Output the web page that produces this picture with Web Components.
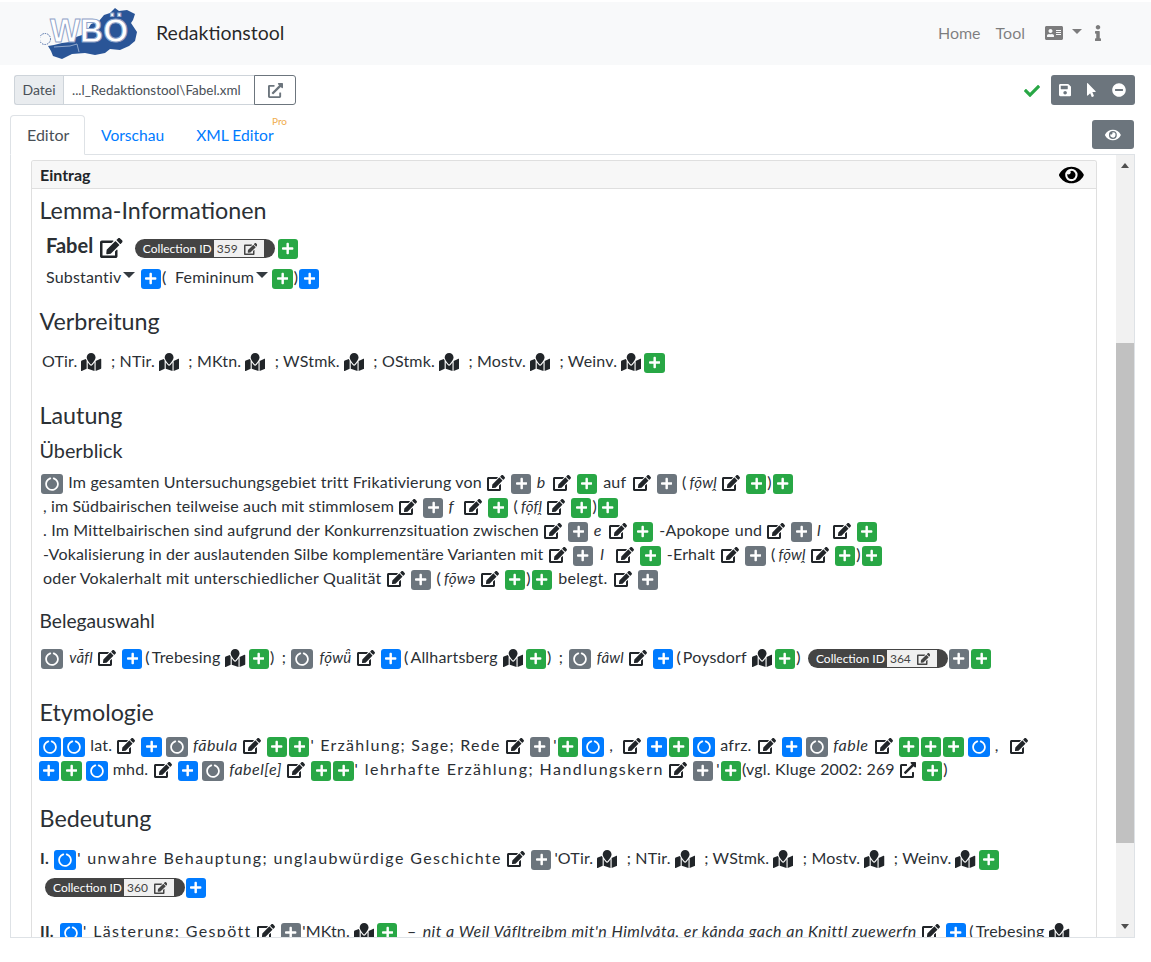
<!DOCTYPE html>
<html lang="de"><head><meta charset="utf-8"><title>Redaktionstool</title>
<style>
html,body{margin:0;padding:0;background:#fff;height:962px;overflow:hidden}
body{font:16px/24px Lato,"Noto Sans","DejaVu Sans",sans-serif;color:#2b3035}
</style></head><body>
<wb-app></wb-app>
<template id="content">
<wb-row top="7"><wb-heading size="23.3">Lemma-Informationen</wb-heading></wb-row>
<wb-row top="5" h="30" left="6" ls="0"><b style="font-size:20px;line-height:30px">Fabel</b> <wb-edit size="20" style="margin-left:3px"></wb-edit> <wb-pill value="359" style="margin-left:3px"></wb-pill><wb-btn c="green" style="margin-left:3px"></wb-btn></wb-row>
<wb-row top="3" left="6">Substantiv<wb-caret></wb-caret> <wb-btn c="blue"></wb-btn>( &nbsp;Femininum<wb-caret></wb-caret> <wb-btn c="green" style="margin-left:0"></wb-btn>)<wb-btn c="blue"></wb-btn></wb-row>
<wb-row top="18"><wb-heading size="23.3">Verbreitung</wb-heading></wb-row>
<wb-row top="13" left="2">OTir. <wb-map></wb-map> <span class="sc">;</span> NTir. <wb-map></wb-map> <span class="sc">;</span> MKtn. <wb-map></wb-map> <span class="sc">;</span> WStmk. <wb-map></wb-map> <span class="sc">;</span> OStmk. <wb-map></wb-map> <span class="sc">;</span> Mostv. <wb-map></wb-map> <span class="sc">;</span> Weinv. <wb-map></wb-map><wb-btn c="green"></wb-btn></wb-row>
<wb-row top="28"><wb-heading size="23.3">Lautung</wb-heading></wb-row>
<wb-row top="8" h="24"><wb-heading size="19.8">Überblick</wb-heading></wb-row>
<wb-row top="7"><wb-btn c="gray" i="circle" style="margin-left:1px"></wb-btn> Im gesamten Untersuchungsgebiet tritt Frikativierung von <wb-edit></wb-edit><wb-btn c="gray"></wb-btn> <i class="w">b</i> <wb-edit></wb-edit><wb-btn c="green"></wb-btn> <span class="m">auf</span> <wb-edit></wb-edit><wb-btn c="gray"></wb-btn> (<span class="p">fọ̄wḽ</span> <wb-edit></wb-edit><wb-btn c="green"></wb-btn>)<wb-btn c="green"></wb-btn></wb-row>
<wb-row left="3" ls=".12">, im Südbairischen teilweise auch mit stimmlosem <wb-edit></wb-edit><wb-btn c="gray"></wb-btn> <i class="w" style="margin-right:5px">f</i> <wb-edit></wb-edit><wb-btn c="green"></wb-btn> (<span class="p">fọ̄fḽ</span> <wb-edit></wb-edit><wb-btn c="green"></wb-btn>)<wb-btn c="green"></wb-btn></wb-row>
<wb-row left="3" ls=".165">. Im Mittelbairischen sind aufgrund der Konkurrenzsituation zwischen <wb-edit></wb-edit><wb-btn c="gray"></wb-btn> <i class="w">e</i> <wb-edit></wb-edit><wb-btn c="green"></wb-btn> <span class="m">-Apokope</span> und <wb-edit></wb-edit><wb-btn c="gray"></wb-btn> <i class="w ll">l</i> <wb-edit></wb-edit><wb-btn c="green"></wb-btn></wb-row>
<wb-row left="3" ls=".165">-Vokalisierung in der auslautenden Silbe komplementäre Varianten mit <wb-edit></wb-edit><wb-btn c="gray"></wb-btn> <i class="w ll" style="margin-left:2px">l</i> <wb-edit></wb-edit><wb-btn c="green"></wb-btn> <span class="m">-Erhalt</span> <wb-edit></wb-edit><wb-btn c="gray"></wb-btn> (<span class="p">fọ̄wḽ</span> <wb-edit></wb-edit><wb-btn c="green"></wb-btn>)<wb-btn c="green"></wb-btn></wb-row>
<wb-row left="3" ls=".25">oder Vokalerhalt mit unterschiedlicher Qualität <wb-edit></wb-edit><wb-btn c="gray"></wb-btn> (<span class="p">fọ̄wə</span> <wb-edit></wb-edit><wb-btn c="green"></wb-btn>)<wb-btn c="green"></wb-btn> <span class="m">belegt.</span> <wb-edit></wb-edit><wb-btn c="gray"></wb-btn></wb-row>
<wb-row top="19" h="24"><wb-heading size="19.2">Belegauswahl</wb-heading></wb-row>
<wb-row top="12"><wb-btn c="gray" i="circle" style="margin-left:1px"></wb-btn> <span class="p pb">vå̄fl</span> <wb-edit></wb-edit><wb-btn c="blue"></wb-btn><span class="o">(<span class="q">Trebesing</span></span> <wb-map></wb-map><wb-btn c="green"></wb-btn>) <span class="sc">;</span> <wb-btn c="gray" i="circle" style="margin-left:1px"></wb-btn> <span class="p pb">fọ̄wü̯</span> <wb-edit></wb-edit><wb-btn c="blue"></wb-btn><span class="o">(<span class="q">Allhartsberg</span></span> <wb-map></wb-map><wb-btn c="green"></wb-btn>) <span class="sc">;</span> <wb-btn c="gray" i="circle" style="margin-left:1px"></wb-btn> <span class="p pb">fâwl</span> <wb-edit></wb-edit><wb-btn c="blue"></wb-btn><span class="o">(<span class="q">Poysdorf</span></span> <wb-map></wb-map><wb-btn c="green"></wb-btn>) <wb-pill value="364" style="margin-left:3px"></wb-pill><wb-btn c="gray"></wb-btn><wb-btn c="green"></wb-btn></wb-row>
<wb-row top="29"><wb-heading size="23.3">Etymologie</wb-heading></wb-row>
<wb-row top="6" left="-2"><wb-btn c="blue" i="circle" style="margin-left:1px"></wb-btn><wb-btn c="blue" i="circle" style="margin-left:1px"></wb-btn> lat. <wb-edit></wb-edit><wb-btn c="blue"></wb-btn><wb-btn c="gray" i="circle"></wb-btn> <i class="f">fābula</i> <wb-edit></wb-edit><wb-btn c="green"></wb-btn><wb-btn c="green"></wb-btn><span class="g" style="letter-spacing:1.26px">' Erzählung; Sage; Rede</span> <wb-edit></wb-edit><wb-btn c="gray"></wb-btn><span class="a">'</span><wb-btn c="green"></wb-btn><wb-btn c="blue" i="circle"></wb-btn> , &nbsp;<wb-edit></wb-edit><wb-btn c="blue"></wb-btn><wb-btn c="green"></wb-btn><wb-btn c="blue" i="circle"></wb-btn> afrz. <wb-edit style="margin-left:2px"></wb-edit><wb-btn c="blue"></wb-btn><wb-btn c="gray" i="circle"></wb-btn> <i class="f">fable</i> <wb-edit style="margin-left:2px"></wb-edit><wb-btn c="green"></wb-btn><wb-btn c="green"></wb-btn><wb-btn c="green"></wb-btn><wb-btn c="blue" i="circle"></wb-btn> , &nbsp;<wb-edit style="margin-left:3px"></wb-edit></wb-row>
<wb-row left="-2"><wb-btn c="blue"></wb-btn><wb-btn c="green"></wb-btn><wb-btn c="blue" i="circle"></wb-btn> mhd. <wb-edit></wb-edit><wb-btn c="blue"></wb-btn><wb-btn c="gray" i="circle"></wb-btn> <i class="f">fabel[e]</i> <wb-edit></wb-edit><wb-btn c="green"></wb-btn><wb-btn c="green"></wb-btn><span class="g" style="letter-spacing:1.43px">' lehrhafte Erzählung; Handlungskern</span> <wb-edit></wb-edit><wb-btn c="gray"></wb-btn><span class="a">'</span><wb-btn c="green"></wb-btn>(vgl. Kluge 2002: 269 <wb-edit kind="ext"></wb-edit><wb-btn c="green"></wb-btn>)</wb-row>
<wb-row top="23"><wb-heading size="23.3">Bedeutung</wb-heading></wb-row>
<wb-row top="13"><b>I.</b> <wb-btn c="blue" i="circle" style="margin-left:1px"></wb-btn><span class="g">' unwahre Behauptung; unglaubwürdige Geschichte</span> <wb-edit></wb-edit><wb-btn c="gray"></wb-btn><span class="a">'</span>OTir. <wb-map></wb-map> <span class="sc">;</span> NTir. <wb-map></wb-map> <span class="sc">;</span> WStmk. <wb-map></wb-map> <span class="sc">;</span> Mostv. <wb-map></wb-map> <span class="sc">;</span> Weinv. <wb-map></wb-map><wb-btn c="green"></wb-btn></wb-row>
<wb-row top="4" left="5"><wb-pill value="360"></wb-pill><wb-btn c="blue"></wb-btn></wb-row>
<wb-row top="21"><b>II.</b> <wb-btn c="blue" i="circle" style="margin-left:2px"></wb-btn><span class="g">' Lästerung; Gespött</span> <wb-edit></wb-edit><wb-btn c="gray"></wb-btn>'MKtn. <wb-map></wb-map><wb-btn c="green"></wb-btn> &nbsp;– <i style="letter-spacing:.46px;margin-left:2px">nit a Weil Våfltreibm mit'n Himlvåta, er kånda gach an Knittl zuewerfn</i> <wb-edit></wb-edit><wb-btn c="blue"></wb-btn><span class="o">(<span class="q">Trebesing</span></span> <wb-map></wb-map></wb-row>
</template>
<script>
const P={
edit:[576,"M402.6 83.2l90.2 90.2c3.8 3.8 3.8 10 0 13.8L274.4 405.6l-92.8 10.3c-12.4 1.4-22.9-9.1-21.5-21.5l10.3-92.8L388.8 83.2c3.8-3.8 10-3.8 13.8 0zm162-22.9l-48.8-48.8c-15.2-15.2-39.9-15.2-55.2 0l-35.4 35.4c-3.8 3.8-3.8 10 0 13.8l90.2 90.2c3.8 3.8 10 3.8 13.8 0l35.4-35.4c15.2-15.3 15.2-40 0-55.2zM384 346.2V448H64V128h229.8c3.2 0 6.2-1.3 8.5-3.5l40-40c7.6-7.6 2.2-20.5-8.5-20.5H48C21.5 64 0 85.5 0 112v352c0 26.5 21.5 48 48 48h352c26.5 0 48-21.5 48-48V306.2c0-10.7-12.9-16-20.5-8.5l-40 40c-2.2 2.3-3.5 5.3-3.5 8.5z"],
plus:[448,"M416 208H272V64c0-17.67-14.33-32-32-32h-32c-17.67 0-32 14.33-32 32v144H32c-17.67 0-32 14.33-32 32v32c0 17.67 14.33 32 32 32h144v144c0 17.67 14.33 32 32 32h32c17.67 0 32-14.33 32-32V304h144c17.67 0 32-14.33 32-32v-32c0-17.67-14.33-32-32-32z"],
circle:[512,"M288 39.056v16.659c0 10.804 7.281 20.159 17.686 23.066C383.204 100.434 440 171.518 440 256c0 101.689-82.295 184-184 184-101.689 0-184-82.295-184-184 0-84.47 56.786-155.564 134.312-177.219C216.719 75.874 224 66.517 224 55.712V39.064c0-15.709-14.834-27.153-30.046-23.234C86.603 43.482 7.394 141.206 8.003 257.332c.72 137.052 111.477 246.956 248.531 246.667C393.255 503.711 504 392.788 504 256c0-115.633-79.14-212.779-186.211-240.236C302.678 11.889 288 23.456 288 39.056z"],
map:[576,"M288 0c-69.59 0-126 56.41-126 126 0 56.26 82.35 158.8 113.9 196.02 6.39 7.54 17.82 7.54 24.2 0C331.65 284.8 414 182.26 414 126 414 56.41 357.59 0 288 0zM20.12 215.95A32.006 32.006 0 0 0 0 245.66v250.32c0 11.32 11.43 19.06 21.94 14.86L160 448V214.92c-8.84-15.98-16.07-31.54-21.25-46.42L20.12 215.95zM288 359.67c-14.07 0-27.38-6.18-36.51-16.96-19.66-23.2-40.57-49.62-59.49-76.72V448l192 64V266c-18.92 27.09-39.82 53.52-59.49 76.72-9.13 10.77-22.44 16.95-36.51 16.95zm266.06-198.51L416 224v288l139.88-55.95A31.996 31.996 0 0 0 576 426.34V176.02c0-11.32-11.43-19.06-21.94-14.86z"],
eye:[576,"M572.52 241.4C518.29 135.59 410.93 64 288 64S57.68 135.64 3.48 241.41a32.35 32.35 0 0 0 0 29.19C57.71 376.41 165.07 448 288 448s230.32-71.64 284.52-177.41a32.35 32.35 0 0 0 0-29.19zM288 400a144 144 0 1 1 144-144 143.93 143.93 0 0 1-144 144zm0-240a95.31 95.31 0 0 0-25.31 3.79 47.85 47.85 0 0 1-66.9 66.9A95.78 95.78 0 1 0 288 160z"],
save:[448,"M433.941 129.941l-83.882-83.882A48 48 0 0 0 316.118 32H48C21.49 32 0 53.49 0 80v352c0 26.51 21.49 48 48 48h352c26.51 0 48-21.49 48-48V163.882a48 48 0 0 0-14.059-33.941zM224 416c-35.346 0-64-28.654-64-64 0-35.346 28.654-64 64-64s64 28.654 64 64c0 35.346-28.654 64-64 64zm96-304.52V212c0 6.627-5.373 12-12 12H76c-6.627 0-12-5.373-12-12V108c0-6.627 5.373-12 12-12h228.52c3.183 0 6.235 1.264 8.485 3.515l3.48 3.48A11.996 11.996 0 0 1 320 111.48z"],
pointer:[320,"M302.189 329.126H196.105l55.831 135.993c3.889 9.428-.555 19.999-9.444 23.999l-49.165 21.427c-9.165 4-19.443-.571-23.332-9.714l-53.053-129.136-86.664 89.138C18.729 472.71 0 463.554 0 447.977V18.299C0 1.899 19.921-6.096 30.277 5.443l284.412 292.542c11.472 11.179 3.007 31.141-12.5 31.141z"],
minus:[512,"M256 8C119 8 8 119 8 256s111 248 248 248 248-111 248-248S393 8 256 8zM124 296c-6.6 0-12-5.4-12-12v-56c0-6.6 5.4-12 12-12h264c6.6 0 12 5.4 12 12v56c0 6.6-5.4 12-12 12H124z"],
check:[512,"M173.898 439.404l-166.4-166.4c-9.997-9.997-9.997-26.206 0-36.204l36.203-36.204c9.997-9.998 26.207-9.998 36.204 0L192 312.69 432.095 72.596c9.997-9.997 26.207-9.997 36.204 0l36.203 36.204c9.997 9.997 9.997 26.206 0 36.204l-294.4 294.401c-9.998 9.997-26.207 9.997-36.204-.001z"],
ext:[512,"M432 320h-32a16 16 0 0 0-16 16v112H64V128h144a16 16 0 0 0 16-16V80a16 16 0 0 0-16-16H48A48 48 0 0 0 0 112v352a48 48 0 0 0 48 48h352a48 48 0 0 0 48-48V336a16 16 0 0 0-16-16zM488 0H360c-21.37 0-32.05 25.91-17 41l35.73 35.73L135 320.37a24 24 0 0 0 0 34L157.67 377a24 24 0 0 0 34 0l243.61-243.68L471 169c15 15 41 4.5 41-17V24a24 24 0 0 0-24-24z"],
idcard:[576,"M528 32H48C21.5 32 0 53.5 0 80v352c0 26.5 21.5 48 48 48h480c26.5 0 48-21.5 48-48V80c0-26.5-21.5-48-48-48zm-352 96c35.3 0 64 28.7 64 64s-28.7 64-64 64-64-28.7-64-64 28.7-64 64-64zm112 236.8c0 10.6-10 19.2-22.4 19.2H86.4C74 384 64 375.4 64 364.8v-19.2c0-31.8 30.1-57.6 67.2-57.6h5c12.3 5.1 25.7 8 39.8 8s27.6-2.9 39.8-8h5c37.1 0 67.2 25.8 67.2 57.6v19.2zM512 312c0 4.4-3.6 8-8 8H360c-4.4 0-8-3.6-8-8v-16c0-4.4 3.6-8 8-8h144c4.4 0 8 3.6 8 8v16zm0-64c0 4.4-3.6 8-8 8H360c-4.4 0-8-3.6-8-8v-16c0-4.4 3.6-8 8-8h144c4.4 0 8 3.6 8 8v16zm0-64c0 4.4-3.6 8-8 8H360c-4.4 0-8-3.6-8-8v-16c0-4.4 3.6-8 8-8h144c4.4 0 8 3.6 8 8v16z"],
info:[192,"M20 424.229h20V279.771H20c-11.046 0-20-8.954-20-20V212c0-11.046 8.954-20 20-20h112c11.046 0 20 8.954 20 20v212.229h20c11.046 0 20 8.954 20 20V492c0 11.046-8.954 20-20 20H20c-11.046 0-20-8.954-20-20v-47.771c0-11.046 8.954-20 20-20zM96 0C56.235 0 24 32.235 24 72s32.235 72 72 72 72-32.235 72-72S135.764 0 96 0z"]};
function svg(n,h,color){const[w,d]=P[n];return `<svg xmlns="http://www.w3.org/2000/svg" viewBox="0 0 ${w} 512" width="${w/512*h}" height="${h}" style="display:block;flex:none" fill="${color||'currentColor'}"><path d="${d}"/></svg>`}
function def(name,html,init){customElements.define(name,class extends HTMLElement{constructor(){super();this.attachShadow({mode:'open'})}connectedCallback(){this.shadowRoot.innerHTML=typeof html==='function'?html(this):html;init&&init(this)}})}
const COL={green:'#28a745',blue:'#007bff',gray:'#6c757d'};
def('wb-btn',e=>{const i=e.getAttribute('i')||'plus',c=COL[e.getAttribute('c')];return `<style>:host{display:inline-flex;align-items:center;justify-content:center;vertical-align:middle;box-sizing:border-box;height:20px;width:${i==='circle'?22:20.25}px;margin:-1px 1px 0 ${i==='circle'?3:1}px;background:${c};color:#fff;border-radius:3px}</style>${svg(i,i==='circle'?14:13)}`});
def('wb-edit',e=>{const k=e.getAttribute('kind')||'edit',s=+e.getAttribute('size')||16;return `<style>:host{display:inline-block;vertical-align:middle;margin:-3px 5px 0 1px;color:#212529}</style>${svg(k,s)}`});
def('wb-map',`<style>:host{display:inline-block;vertical-align:middle;margin:-2px 2px 0 -.35px;color:#212529}</style>${svg('map',18)}`);
def('wb-caret',`<style>:host{display:inline-block;vertical-align:middle;width:0;height:0;margin:-8px 0 0 2px;border:6px solid transparent;border-top:6px solid #343a40;border-bottom:0}</style>`);
def('wb-pill',e=>`<style>:host{display:inline-flex;vertical-align:middle;align-items:center;box-sizing:border-box;width:140px;height:19px;margin-top:-1px;background:#444;border-radius:10px;color:#fff;font-size:12px;letter-spacing:0;line-height:19px;padding-left:8px;white-space:nowrap}
.v{margin-left:auto;margin-right:11px;width:50px;height:17px;box-sizing:border-box;background:#f0f0f0;color:#444;display:flex;align-items:center;padding-left:3px;line-height:17px}svg{margin-left:6px}</style>Collection ID<span class="v">${e.getAttribute('value')}${svg('edit',12)}</span>`);
def('wb-row',e=>{const t=e.getAttribute('top')||0,h=e.getAttribute('h')||24,l=e.getAttribute('left')||0,ls=e.getAttribute('ls')||.18;return `<style>:host{display:block;margin-top:${t}px;min-height:${h}px;margin-left:${l}px;line-height:${h}px;white-space:nowrap;letter-spacing:${ls}px}</style><slot></slot>`});
def('wb-heading',e=>{const s=e.getAttribute('size');return `<style>:host{display:block;margin-left:-.5px;font-size:${s}px;line-height:1.25;font-weight:400;letter-spacing:0}</style><slot></slot>`});
def('wb-logo',`<style>:host{display:block;width:97px;height:52px;flex:none}svg{display:block}text{font:bold 33px "Liberation Sans",sans-serif}</style>
<svg width="97" height="52" viewBox="40 8 97 52"><path d="M48 46 54 45 62 43 70 42 76 37 85 34 91 24 99 21 104 15 110 13 115 8 119 11 127 10 135 14 133 20 131 23 137 32 135 41 129 46 120 50 110 49 105 53 95 55 85 53 72 54 62 59 53 56 51 51Z" fill="#2a5597"/><circle cx="45" cy="39" r="5.5" fill="none" stroke="#4a6aa5" stroke-width="1" stroke-dasharray="1.5 1"/><path d="M54 47 70 46 77 44 79 52" fill="none" stroke="#a9bcd9" stroke-width=".8"/><text x="50" y="42" fill="#fff" stroke="#8fa3c9" stroke-width="1" textLength="78" lengthAdjust="spacingAndGlyphs">WBÖ</text></svg>`);
def('wb-nav',`<style>:host{display:flex;align-items:center;box-sizing:border-box;height:63px;margin-top:2px;padding-left:40px;background:#f8f9fa;color:rgba(0,0,0,.5);letter-spacing:0}
.b{margin-left:19px;font-size:19.5px;color:rgba(0,0,0,.85);margin-top:-1px}.r{margin-left:auto;display:flex;align-items:center;padding-right:50px;margin-top:-1px}
.t{margin-right:15px}.t+.t{margin-right:20px}.c{width:0;height:0;border:5px solid transparent;border-top-color:rgba(0,0,0,.5);border-bottom:0;margin:-3px 13px 0 9px}</style>
<wb-logo></wb-logo><span class="b">Redaktionstool</span><div class="r"><span class="t">Home</span><span class="t">Tool</span>${svg('idcard',16)}<span class="c"></span>${svg('info',16)}</div>`);
def('wb-file',`<style>:host{display:flex;height:30px;font-size:14px;line-height:28px;box-sizing:border-box}
div{box-sizing:border-box;border:1px solid #ced4da;height:30px;white-space:nowrap}
.a{width:49px;background:#e9ecef;color:#495057;text-align:center;border-radius:3px 0 0 3px;border-right:0}.i{width:192px;color:#495057;padding-left:8px;font-size:13.45px}
.e{width:42px;border:1px solid #6c757d;border-radius:0 3px 3px 0;margin-left:-1px;display:flex;align-items:center;justify-content:center;color:#6c757d}</style>
<div class="a">Datei</div><div class="i">...l_Redaktionstool\\Fabel.xml</div><div class="e">${svg('ext',15)}</div>`);
def('wb-actions',`<style>:host{display:flex;align-items:center;color:#fff}.k{margin-right:11px;margin-top:1px}.g{width:84px;height:30px;background:#6c757d;border-radius:3px;display:flex;align-items:center;justify-content:space-between;padding:0 9px 0 8px;box-sizing:border-box}</style>
<span class="k">${svg('check',16,'#28a745')}</span><div class="g">${svg('save',14)}${svg('pointer',14)}${svg('minus',14)}</div>`);
def('wb-tabs',`<style>:host{display:flex;height:40px;box-sizing:border-box;margin:10px 16px 0 10px;border-bottom:1px solid #dee2e6;position:relative}
a{display:block;box-sizing:border-box;height:40px;padding:8px 16px;color:#007bff;white-space:nowrap;font-size:15.6px}
.on{width:75px;color:#495057;border:1px solid #dee2e6;border-bottom-color:#fff;border-radius:4px 4px 0 0;background:#fff;font-size:16px;line-height:22px}
sup{position:absolute;font-size:10px;line-height:12px;color:#f0ad4e;left:262px;top:0}
.eye{margin-left:auto;margin-right:1px;margin-top:5px;width:42px;height:29px;border-radius:3px;background:#6c757d;color:#fff;display:flex;align-items:center;justify-content:center}</style>
<a class="on">Editor</a><a>Vorschau</a><a>XML Editor</a><sup>Pro</sup><div class="eye">${svg('eye',14)}</div>`);
def('wb-scrollbar',`<style>:host{display:flex;flex-direction:column;width:18px;height:100%;background:#f1f1f1;flex:none;position:relative}
.u,.d{position:absolute;left:5px;width:0;height:0;border:4px solid transparent}.u{top:8px;border-top:0;border-bottom:5px solid #505050}.d{bottom:8px;border-bottom:0;border-top:5px solid #505050}
.t{margin-top:188px;height:500px;background:#c1c1c1}</style><span class="u"></span><div class="t"></div><span class="d"></span>`);
def('wb-card',`<style>:host{display:block;box-sizing:border-box;width:1066px;margin:5px 0 0 20px;border:1px solid #dfdfdf;border-bottom:0;border-radius:3px 3px 0 0;height:800px;overflow:hidden}
.h{height:28px;box-sizing:border-box;border-bottom:1px solid #dfdfdf;background:#f7f7f7;display:flex;align-items:center;justify-content:space-between;padding:0 12px 0 8px;font-size:16px;font-weight:700;color:#212529}
.b{padding:0 8px}</style><div class="h"><span>Eintrag</span><span style="color:#000">${svg('eye',22)}</span></div><div class="b"><slot></slot></div>`);
def('wb-app',`<style>:host{display:block;height:962px}.tb{display:flex;justify-content:space-between;margin:10px 16px 0 14px}
.pane{display:flex;box-sizing:border-box;height:783px;margin:0 16px 0 10px;border-left:1px solid #dee2e6;border-bottom:1px solid #dee2e6;border-right:1px solid #dee2e6;justify-content:space-between;overflow:hidden}
.g{letter-spacing:1.37px}
.p{font-style:italic;font-size:15px;margin-left:3px}.pb{margin-left:1px}.f{letter-spacing:.5px}
.sc{margin:0 0 0 3px}.m{margin:0 1px}.w{margin:0 2px 0 0}.ll{margin-right:7px}.o{margin-left:2px}.q{margin:0 1px 0 2px}.a{margin-left:2px}
</style><wb-nav></wb-nav><div class="tb"><wb-file></wb-file><wb-actions></wb-actions></div><wb-tabs></wb-tabs>
<div class="pane"><wb-card id="c"></wb-card><wb-scrollbar></wb-scrollbar></div>`,e=>{e.shadowRoot.getElementById('c').append(document.getElementById('content').content.cloneNode(true))});
</script>
</body></html>
